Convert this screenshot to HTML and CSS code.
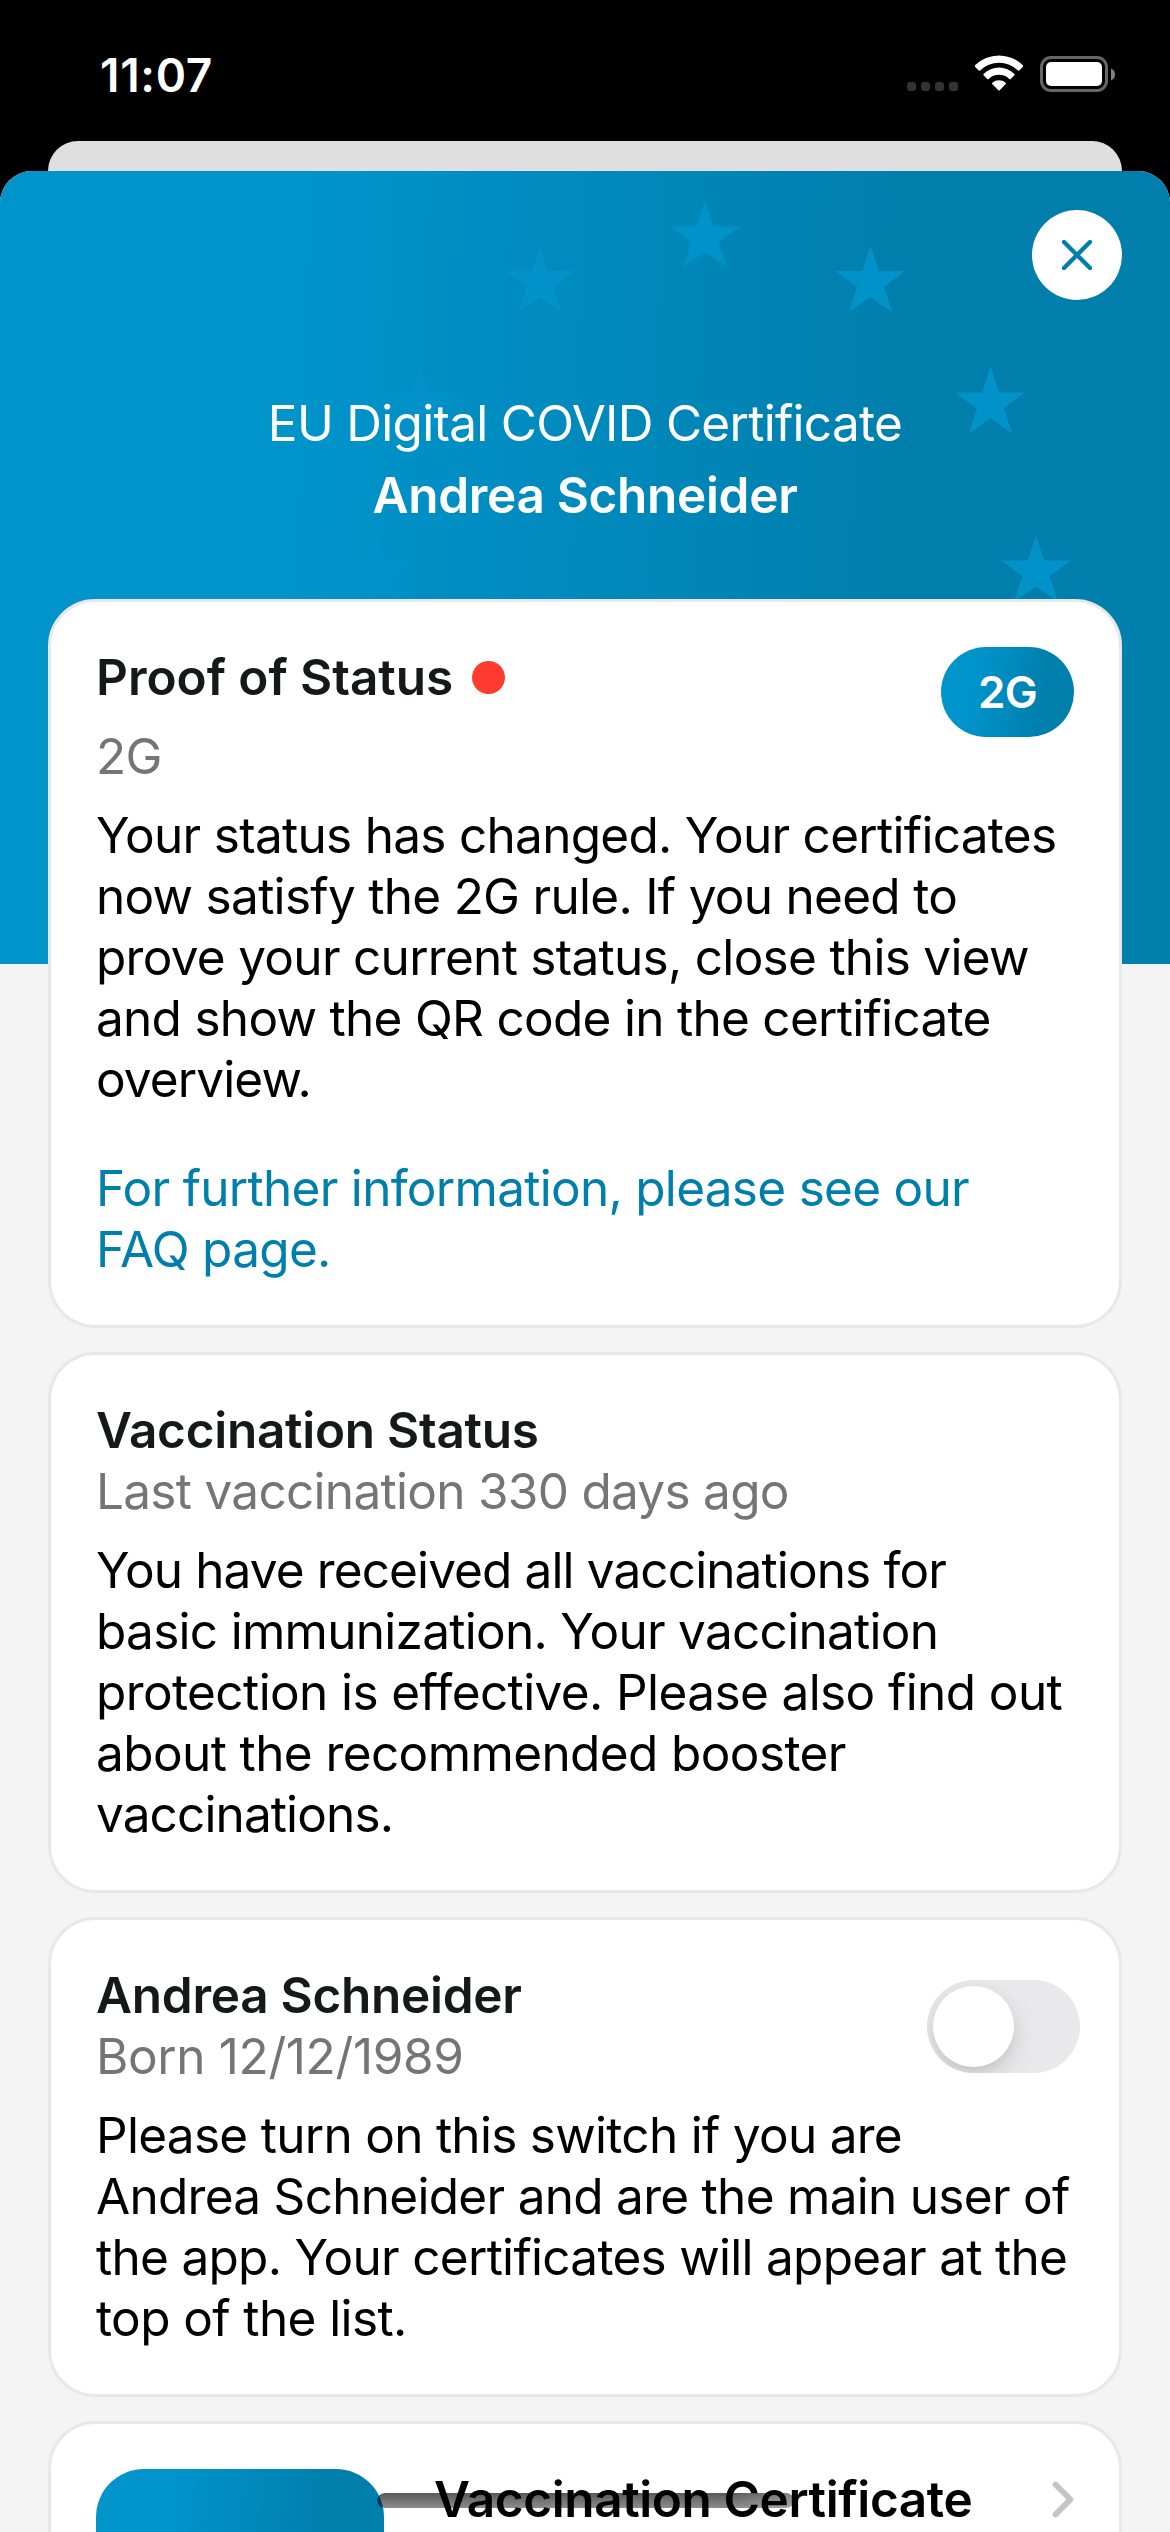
FILE: index.html
```html
<!DOCTYPE html>
<html lang="en">
<head>
<meta charset="utf-8">
<title>EU Digital COVID Certificate</title>
<link rel="stylesheet" href="styles.css">
</head>
<body>
<div class="phone">
  <header class="status-bar">
    <span class="time">11:07</span>
    <div class="indicators">
      <span class="signal"><i></i><i></i><i></i><i></i></span>
      <svg class="wifi" viewBox="0 0 48 36" width="48" height="36">
        <path fill="#fff" d="M0 10.2A34.5 34.5 0 0 1 48 10.2Q48.6 11 48 11.7L44.3 15.4Q43.600 16 42.900 15.400A27.300 27.300 0 0 0 5.100 15.400Q4.400 16 3.700 15.400L0 11.700Q-.6 11 0 10.200Z"/>
        <path fill="#fff" d="M8.600 18.900A22 22 0 0 1 39.400 18.900Q40 19.600 39.400 20.300L35.700 24Q35 24.600 34.300 24A14.800 14.800 0 0 0 13.700 24Q13 24.600 12.300 24L8.600 20.300Q8 19.600 8.600 18.900Z"/>
        <path fill="#fff" d="M17.300 27.700A10.500 10.500 0 0 1 30.700 27.700Q31.300 28.400 30.700 29.100L24.700 35.200Q24 35.900 23.300 35.200L17.300 29.100Q16.700 28.400 17.300 27.700Z"/>
      </svg>
      <svg class="battery" viewBox="0 0 75 36" width="75" height="36">
        <rect x="1.500" y="1.500" width="65" height="33" rx="9.500" fill="none" stroke="#666" stroke-width="3"/>
        <rect x="6" y="6" width="56" height="24" rx="5" fill="#fff"/>
        <path d="M71 12.500Q75 14 75 18.500T71 24.500Z" fill="#808080"/>
      </svg>
    </div>
  </header>
  <div class="sheet-behind"></div>
  <main class="sheet">
    <section class="hero">
      <svg class="stars" viewBox="0 0 1170 793" width="1170" height="793">
        <g fill="#0092c8">
          <path d="M705 29 713.300 55.500H740.500L718.500 71 727 96 705 81 683 96 691.500 71 669.500 55.500H696.700Z"/>
          <path d="M870.500 75 878.800 100H905L884 116 892.500 141.500 870.500 126 848.500 141.500 857 116 835 100H862.200Z"/>
          <path d="M540 75 548.300 100H575.500L553.500 116 562 141.500 540 126 518 141.500 526.500 116 504.500 100H531.700Z"/>
          <path d="M990.500 195 998.800 221.500H1025L1004 237.500 1012.500 263 990.500 247 968.500 263 977 237.500 955 221.500H982.200Z"/>
          <path d="M1036 364 1044.300 389.500H1071.500L1049.500 405 1058 431 1036 415.500 1014 431 1022.500 405 1000.500 389.500H1027.700Z"/>
          <path d="M420 195 428.300 221.500H455.500L433.500 237.500 442 263 420 247 398 263 406.500 237.500 384.500 221.500H411.700Z"/>
          <path d="M376 364 384.300 389.500H411.500L389.500 405 398 431 376 415.500 354 431 362.500 405 340.500 389.500H367.700Z"/>
        </g>
      </svg>
      <button class="close" aria-label="Close">
        <svg viewBox="0 0 30 30" width="30" height="30"><path d="M2 2 28 28M28 2 2 28" stroke="#007fad" stroke-width="4.300" stroke-linecap="round"/></svg>
      </button>
      <h1 class="heading"><span class="kind">EU Digital COVID Certificate</span><span class="holder">Andrea Schneider</span></h1>
    </section>
    <div class="cards">
      <article class="card">
        <div class="card-head">
          <div class="titles spaced">
            <h2><span class="wide">Proof of Status</span><i class="dot"></i></h2>
            <p class="sub">2G</p>
          </div>
          <span class="pill">2G</span>
        </div>
        <p class="text">Your status has changed. Your certificates<br>now satisfy the 2G rule. If you need to<br>prove your current status, close this view<br>and show the QR code in the certificate<br><span class="tight">overview.</span></p>
        <a class="link">For further information, please see our<br>FAQ page.</a>
      </article>
      <article class="card">
        <div class="titles">
          <h2>Vaccination Status</h2>
          <p class="sub">Last vaccination 330 days ago</p>
        </div>
        <p class="text"><span class="tight">You have received all vaccinations for</span><br>basic immunization. Your vaccination<br><span class="loose">protection is effective. Please also find out</span><br><span class="loose">about the recommended booster</span><br><span class="tight">vaccinations.</span></p>
      </article>
      <article class="card">
        <div class="card-head">
          <div class="titles">
            <h2>Andrea Schneider</h2>
            <p class="sub"><span class="date">Born 12/12/1989</span></p>
          </div>
          <span class="switch"><i class="knob"></i></span>
        </div>
        <p class="text">Please turn on this switch if you are<br>Andrea Schneider and are the main user of<br>the app. Your certificates will appear at the<br><span class="loose">top of the list.</span></p>
      </article>
      <article class="card cert">
        <div class="tile"></div>
        <h2 class="cert-title">Vaccination Certificate</h2>
        <svg class="chevron" viewBox="0 0 22 37" width="22" height="37"><path d="M3.500 3.500 18.500 18.500 3.500 33.500" fill="none" stroke="#c4c4c6" stroke-width="5.800" stroke-linecap="round" stroke-linejoin="round"/></svg>
      </article>
    </div>
  </main>
  <div class="home-indicator"></div>
</div>
</body>
</html>
```
FILE: styles.css
```css
* { box-sizing: border-box; margin: 0; padding: 0; }
html, body { width: 1170px; height: 2532px; overflow: hidden; }
body { background: #000; font-family: Inter, "Liberation Sans", sans-serif; font-size: 49.5px; line-height: 61px; color: #000; letter-spacing: -0.71px; }
.phone { position: relative; width: 1170px; height: 2532px; overflow: hidden; display: flex; flex-direction: column; }

.status-bar { flex: none; height: 141px; padding: 55px 55px 0 100px; display: flex; justify-content: space-between; align-items: flex-start; }
.time { color: #fff; font-size: 46px; font-weight: 600; line-height: 40px; letter-spacing: 0.7px; }
.indicators { display: flex; }
.signal { display: flex; gap: 5px; margin: 27px 17px 0 0; }
.signal i { width: 9px; height: 9px; border-radius: 3px; background: #333; }
.wifi { margin-right: 17px; }
.battery { margin-top: 1px; }

.sheet-behind { flex: none; height: 30px; margin: 0 48px; background: #dfdfdf; border-radius: 30px 30px 0 0; }
.sheet { flex: none; height: 2361px; background: #f4f4f4; border-radius: 32px 32px 0 0; overflow: hidden; }

.hero { position: relative; height: 793px; background: linear-gradient(92deg, #0094cb 25%, #007fad 75%); }
.stars { position: absolute; left: 0; top: 0; }
.close { position: absolute; right: 48px; top: 39px; width: 90px; height: 90px; border: 0; border-radius: 50%; background: #fff; display: flex; align-items: center; justify-content: center; }
.heading { position: relative; padding-top: 222px; color: #fff; font-size: inherit; font-weight: 400; display: flex; flex-direction: column; align-items: center; gap: 11px; }
.holder { font-weight: 600; letter-spacing: -0.32px; }

.cards { position: relative; margin-top: -365px; padding: 0 48px; display: flex; flex-direction: column; gap: 24px; }
.card { background: #fff; border: 3px solid #e8e8e8; border-radius: 47px; padding: 45px; display: flex; flex-direction: column; gap: 18px; }
.card-head { display: flex; justify-content: space-between; align-items: flex-start; }
.titles { display: flex; flex-direction: column; }
.spaced { gap: 18px; }
h2 { font-size: inherit; font-weight: 600; color: #17181a; display: flex; align-items: center; letter-spacing: -0.27px; }
.wide { letter-spacing: -0.03px; }
.dot { width: 33px; height: 33px; border-radius: 50%; background: #ff3b30; margin-left: 19px; }
.sub { color: #757575; }
.text, .link { white-space: nowrap; }
.tight { letter-spacing: -0.88px; }
.loose { letter-spacing: -0.6px; }
.date { letter-spacing: -0.37px; }
.link { color: #007fad; margin-top: 30px; }
.pill { width: 133px; height: 90px; border-radius: 45px; background: linear-gradient(100deg, #0094cb 25%, #007fad 75%); color: #fff; font-size: 44px; font-weight: 600; line-height: 90px; text-align: center; }
.switch { width: 153px; height: 93px; margin: 15px -6px -30px 0; padding: 6px; border-radius: 47px; background: #e9e9eb; overflow: hidden; }
.knob { display: block; width: 81px; height: 81px; border-radius: 50%; background: #fff; box-shadow: 0 9px 24px rgba(0,0,0,.14), 0 6px 6px rgba(0,0,0,.03); }
.cert { flex-direction: row; align-items: flex-start; gap: 0; height: 420px; }
.tile { flex: none; width: 288px; height: 288px; border-radius: 48px; background: linear-gradient(94deg, #0094cb 25%, #007fad 75%); }
.cert-title { margin-left: 50px; color: #000; white-space: nowrap; letter-spacing: -0.4px; }
.chevron { margin: 12px 0 0 auto; }
.home-indicator { position: absolute; left: 377px; top: 2493px; width: 417px; height: 15px; border-radius: 8px; background: linear-gradient(rgba(0,0,0,.65), rgba(0,0,0,.45)); mask-image: linear-gradient(90deg, #000 85%, rgba(0,0,0,.75)); }
```
